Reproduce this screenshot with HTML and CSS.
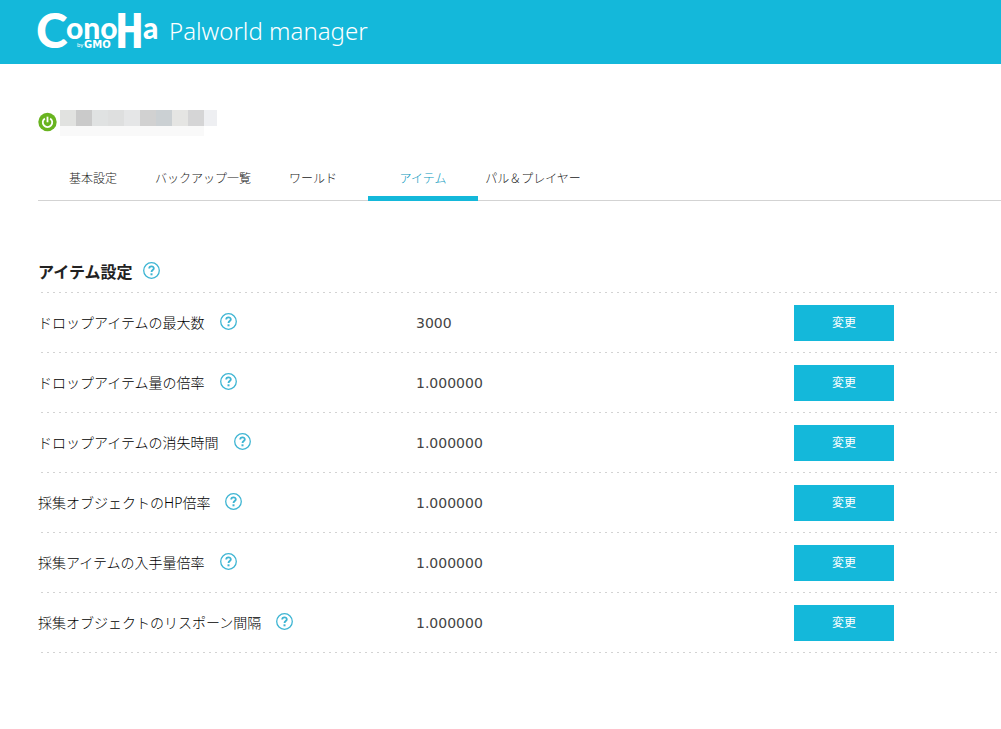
FILE: index.html
```html
<!DOCTYPE html>
<html lang="ja">
<head>
<meta charset="utf-8">
<title>Palworld manager</title>
<link rel="stylesheet" href="styles.css">
</head>
<body>
<svg class="sprite" aria-hidden="true">
  <symbol id="help" viewBox="0 0 17 17">
    <circle cx="8.5" cy="8.5" r="7.8" fill="none" stroke="#3eb5d3" stroke-width="1.3"/>
    <path d="M6.2 6.6C6.2 3.6 10.9 3.7 10.8 6.4C10.7 8 8.5 8.1 8.5 10" fill="none" stroke="#3eb5d3" stroke-width="1.8"/>
    <rect x="7.5" y="11.3" width="2" height="2" fill="#3eb5d3"/>
  </symbol>
</svg>
<header class="header">
  <svg class="logo" viewBox="0 0 122 40" role="img" aria-label="ConoHa by GMO">
    <g class="logo-word">
      <text class="logo-c" x="-2" y="37">C</text>
      <text class="logo-small" x="28" y="28">ono</text>
      <text class="logo-h" x="77" y="37">H</text>
      <text class="logo-small" x="105" y="28">a</text>
    </g>
    <text class="logo-by" x="39" y="36">by</text>
    <text class="logo-gmo" x="46" y="37">GMO</text>
  </svg>
  <span class="product">Palworld manager</span>
</header>
<main class="main">
  <div class="server">
    <svg class="power" viewBox="0 0 20 20" role="img" aria-label="稼働中">
      <circle cx="10" cy="10" r="9.7" fill="#69b420"/>
      <path d="M7.2 6.2A5 5 0 1 0 12.8 6.2" fill="none" stroke="#fff" stroke-width="1.9"/>
      <path d="M10 4.4V10.3" stroke="#fff" stroke-width="1.9"/>
    </svg>
    <svg class="mosaic" viewBox="0 0 157 26" aria-hidden="true" shape-rendering="crispEdges">
      <path fill="#e1e2e0" d="M0 0h16v16H0z"/><path fill="#cacaca" d="M16 0h16v16H16z"/>
      <path fill="#e0e2e2" d="M32 0h16v16H32z"/><path fill="#dedfdf" d="M48 0h16v16H48z"/>
      <path fill="#e5e6e7" d="M64 0h16v16H64z"/><path fill="#d1d1d1" d="M80 0h16v16H80z"/>
      <path fill="#cbd0d3" d="M96 0h16v16H96z"/><path fill="#e5e5e3" d="M112 0h16v16h-16z"/>
      <path fill="#d5d5d6" d="M128 0h16v16h-16z"/><path fill="#eeeff2" d="M144 0h13v16h-13z"/>
      <path fill="#f9f9f9" d="M0 16h144v10H0z"/>
    </svg>
  </div>
  <nav class="tabs">
    <a class="tab" href="#">基本設定</a>
    <a class="tab" href="#">バックアップ一覧</a>
    <a class="tab" href="#">ワールド</a>
    <a class="tab tab-active" href="#" aria-current="page">アイテム</a>
    <a class="tab" href="#">パル＆プレイヤー</a>
  </nav>
  <section>
    <h1 class="title">アイテム設定<svg class="help"><use href="#help"/></svg></h1>
    <dl class="settings">
      <div class="row"><dt class="label">ドロップアイテムの最大数<svg class="help"><use href="#help"/></svg></dt><dd class="value">3000</dd><dd class="action"><button class="change" type="button">変更</button></dd></div>
      <div class="row"><dt class="label">ドロップアイテム量の倍率<svg class="help"><use href="#help"/></svg></dt><dd class="value">1.000000</dd><dd class="action"><button class="change" type="button">変更</button></dd></div>
      <div class="row"><dt class="label">ドロップアイテムの消失時間<svg class="help"><use href="#help"/></svg></dt><dd class="value">1.000000</dd><dd class="action"><button class="change" type="button">変更</button></dd></div>
      <div class="row"><dt class="label">採集オブジェクトのHP倍率<svg class="help"><use href="#help"/></svg></dt><dd class="value">1.000000</dd><dd class="action"><button class="change" type="button">変更</button></dd></div>
      <div class="row"><dt class="label">採集アイテムの入手量倍率<svg class="help"><use href="#help"/></svg></dt><dd class="value">1.000000</dd><dd class="action"><button class="change" type="button">変更</button></dd></div>
      <div class="row"><dt class="label">採集オブジェクトのリスポーン間隔<svg class="help"><use href="#help"/></svg></dt><dd class="value">1.000000</dd><dd class="action"><button class="change" type="button">変更</button></dd></div>
    </dl>
  </section>
</main>
</body>
</html>
```
FILE: styles.css
```css
* { box-sizing: border-box; }
body {
  margin: 0;
  background: #fff;
  color: #222;
  font-family: "Noto Sans", "Noto Sans CJK JP", sans-serif;
  font-size: 14px;
  font-weight: 300;
  line-height: 20px;
}
.sprite { display: none; }
.header {
  display: flex;
  align-items: center;
  gap: 9px;
  height: 64px;
  padding: 0 0 2px 38px;
  background: #14b8da;
  color: #fff;
}
.logo { width: 122px; height: 40px; overflow: visible; fill: #fff; }
.logo-word { font-family: Lato, sans-serif; font-weight: 900; }
.logo-c { font-size: 48px; }
.logo-small { font-size: 30px; }
.logo-h { font-family: "DejaVu Sans Mono", monospace; font-size: 48px; font-weight: 700; }
.logo-by { font: 6px Lato, sans-serif; }
.logo-gmo { font: 700 10px "DejaVu Sans", sans-serif; }
.product { font-size: 24px; line-height: 32px; }
.main { padding: 46px 0 40px 38px; }
.server { display: flex; gap: 3px; }
.power { width: 19px; height: 24px; }
.mosaic { width: 157px; height: 26px; }
.tabs {
  display: flex;
  margin-top: 20px;
  border-bottom: 1px solid #d3d3d3;
}
.tab {
  width: 110px;
  height: 45px;
  margin-bottom: -1px;
  padding-top: 13px;
  border-bottom: 5px solid transparent;
  color: #222;
  font-size: 12px;
  text-align: center;
  text-decoration: none;
  white-space: nowrap;
}
.tab-active { border-color: #14b8da; color: #0897bd; }
.help { flex: none; width: 17px; height: 17px; margin-bottom: 3px; }
.title, .row {
  background: repeating-linear-gradient(90deg, #d3d3d3 0 2px, transparent 2px 6px) 3px 100% / 100% 1px no-repeat;
}
.title {
  display: flex;
  align-items: center;
  gap: 11px;
  margin: 55px 0 0;
  padding-bottom: 5px;
  font-size: 16px;
  font-weight: 700;
  line-height: 32px;
}
.settings { margin: 0; }
.row {
  display: grid;
  grid-template-columns: 378fr 378fr 207fr;
  align-items: center;
  height: 60px;
}
.label { display: flex; align-items: center; gap: 15px; color: #000; }
.value, .action { margin: 0; }
.value { font-family: "DejaVu Sans", sans-serif; font-weight: 400; color: #444; }
.change {
  display: block;
  width: 100px;
  height: 36px;
  padding: 0;
  border: 0;
  background: #14b8da;
  color: #fff;
  font: inherit;
  font-size: 12px;
  font-weight: 400;
  cursor: pointer;
}
```
